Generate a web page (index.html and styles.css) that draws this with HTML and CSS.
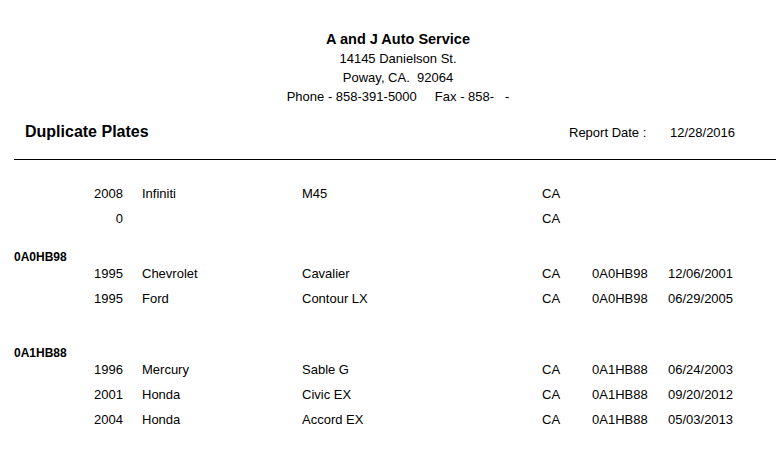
FILE: index.html
```html
<!DOCTYPE html>
<html lang="en">
<head>
<meta charset="utf-8">
<title>Duplicate Plates</title>
<link rel="stylesheet" href="styles.css">
</head>
<body>
<div class="page">
  <header class="company">
    <div class="company-name">A and J Auto Service</div>
    <div class="company-line">14145 Danielson St.</div>
    <div class="company-line">Poway, CA.&nbsp; 92064</div>
    <div class="company-line">Phone - 858-391-5000 &nbsp;&nbsp;&nbsp; Fax - 858- &nbsp;&nbsp;-</div>
  </header>
  <div class="title-bar">
    <div class="report-title">Duplicate Plates</div>
    <div class="report-date"><span class="date-label">Report Date :</span><span class="date-value">12/28/2016</span></div>
  </div>
  <div class="rule"></div>

  <section class="group group-first">
    <div class="row"><span class="year">2008</span><span class="make">Infiniti</span><span class="model">M45</span><span class="state">CA</span><span class="plate"></span><span class="date"></span></div>
    <div class="row"><span class="year">0</span><span class="make"></span><span class="model"></span><span class="state">CA</span><span class="plate"></span><span class="date"></span></div>
  </section>

  <section class="group group-second">
    <div class="group-head">0A0HB98</div>
    <div class="row"><span class="year">1995</span><span class="make">Chevrolet</span><span class="model">Cavalier</span><span class="state">CA</span><span class="plate">0A0HB98</span><span class="date">12/06/2001</span></div>
    <div class="row"><span class="year">1995</span><span class="make">Ford</span><span class="model">Contour LX</span><span class="state">CA</span><span class="plate">0A0HB98</span><span class="date">06/29/2005</span></div>
  </section>

  <section class="group group-third">
    <div class="group-head">0A1HB88</div>
    <div class="row"><span class="year">1996</span><span class="make">Mercury</span><span class="model">Sable G</span><span class="state">CA</span><span class="plate">0A1HB88</span><span class="date">06/24/2003</span></div>
    <div class="row"><span class="year">2001</span><span class="make">Honda</span><span class="model">Civic EX</span><span class="state">CA</span><span class="plate">0A1HB88</span><span class="date">09/20/2012</span></div>
    <div class="row"><span class="year">2004</span><span class="make">Honda</span><span class="model">Accord EX</span><span class="state">CA</span><span class="plate">0A1HB88</span><span class="date">05/03/2013</span></div>
  </section>
</div>
</body>
</html>
```

FILE: styles.css
```css
html, body {
  margin: 0;
  padding: 0;
  background: #ffffff;
}

body {
  font-family: "Liberation Sans", Arial, sans-serif;
  color: #000000;
  font-size: 13px;
}

.page {
  width: 776px;
  overflow: hidden;
}

.company {
  padding-top: 29px;
  text-align: center;
  padding-left: 20px;
}

.company-name {
  font-weight: bold;
  font-size: 14.5px;
  line-height: 20px;
}

.company-line {
  font-size: 13px;
  line-height: 19px;
}

.title-bar {
  display: flex;
  align-items: baseline;
  padding-left: 25px;
  margin-top: 15px;
  height: 21px;
}

.report-title {
  font-weight: bold;
  font-size: 16px;
  line-height: 21px;
  flex: 1;
}

.report-date {
  display: flex;
  font-size: 13px;
  width: 207px;
}

.date-label {
  width: 101px;
}

.rule {
  margin-top: 17px;
  margin-left: 14px;
  height: 1px;
  background: #000000;
}

.group-first {
  margin-top: 26px;
}

.group-second {
  margin-top: 13px;
}

.group-third {
  margin-top: 29px;
}

.group-head {
  font-weight: bold;
  font-size: 12px;
  line-height: 17px;
  padding-left: 14px;
}

.row {
  display: grid;
  grid-template-columns: 123px 179px 240px 50px 76px 1fr;
  line-height: 16px;
  padding-bottom: 9px;
  font-size: 13px;
}

.year {
  text-align: right;
}

.make {
  padding-left: 19px;
}
```
